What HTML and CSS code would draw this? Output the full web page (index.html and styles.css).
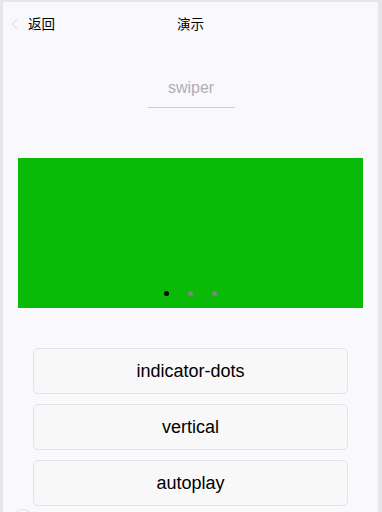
FILE: index.html
```html
<!DOCTYPE html>
<html lang="zh">
<head>
<meta charset="utf-8">
<title>演示</title>
<link rel="stylesheet" href="styles.css">
</head>
<body>
<div class="page">
  <header class="nav">
    <div class="back">
      <svg class="chev" width="8" height="12" viewBox="0 0 8 12"><path d="M6.5 0.8 L1.2 6 L6.5 11.2" fill="none" stroke="#e4e4ea" stroke-width="1.2"/></svg>
      <span>返回</span>
    </div>
    <div class="title">演示</div>
  </header>
  <div class="input-wrap">
    <div class="input">swiper</div>
  </div>
  <div class="swiper">
    <div class="dots">
      <span class="dot active"></span>
      <span class="dot"></span>
      <span class="dot"></span>
    </div>
  </div>
  <div class="buttons">
    <button class="btn">indicator-dots</button>
    <button class="btn">vertical</button>
    <button class="btn">autoplay</button>
  </div>
  <div class="fab"></div>
</div>
</body>
</html>
```

FILE: styles.css
```css
html, body {
  margin: 0;
  padding: 0;
  background: #e6e6e6;
  height: 100%;
  overflow: hidden;
}
.page {
  position: relative;
  margin: 2px 0 0 3px;
  width: 375px;
  height: 510px;
  overflow: hidden;
  background: #f9f8fd;
  font-family: "Liberation Sans", Arial, "Noto Sans CJK SC", sans-serif;
  color: #000;
}
.nav {
  position: relative;
  height: 42px;
  display: flex;
  align-items: center;
  justify-content: center;
}
.back {
  position: absolute;
  left: 8px;
  top: 0;
  height: 42px;
  display: flex;
  align-items: center;
  gap: 9px;
  font-size: 13.5px;
  font-family: "Noto Sans CJK SC", sans-serif;
}
.chev { display: block; margin-top: 1px; }
.title {
  font-size: 13.5px;
  font-family: "Noto Sans CJK SC", sans-serif;
}
.input-wrap {
  display: flex;
  justify-content: center;
  padding-top: 32px;
}
.input {
  width: 87px;
  height: 31px;
  border-bottom: 1px solid #cfcdd3;
  color: #b0afb3;
  font-size: 16px;
  text-align: center;
  line-height: 24px;
  margin-left: 1px;
}
.swiper {
  position: relative;
  margin: 50px 15px 0;
  height: 150px;
  background: #09bb07;
}
.dots {
  position: absolute;
  left: 0;
  right: 0;
  bottom: 12px;
  display: flex;
  justify-content: center;
  gap: 19px;
}
.dot {
  width: 5px;
  height: 5px;
  border-radius: 50%;
  background: #7f8780;
}
.dot.active { background: #000; }
.buttons {
  display: flex;
  flex-direction: column;
  gap: 10px;
  margin: 40px 30px 0;
}
.btn {
  height: 46px;
  border: 1px solid #e3e2e5;
  border-radius: 5px;
  background: #f8f8f8;
  font-family: "Liberation Sans", Arial, sans-serif;
  font-size: 18px;
  color: #000;
  padding: 0;
}
.fab {
  position: absolute;
  left: 9px;
  top: 507px;
  width: 20px;
  height: 20px;
  border-radius: 50%;
  border: 1px solid #e0dfe4;
  background: #f9f8fd;
}
```
